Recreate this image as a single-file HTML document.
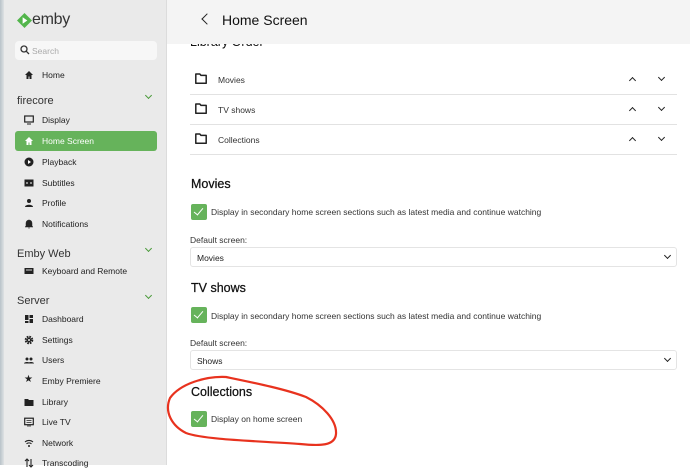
<!DOCTYPE html>
<html><head><meta charset="utf-8"><style>
*{margin:0;padding:0;box-sizing:border-box}
body{width:690px;height:465px;overflow:hidden;background:#fff;font-family:"Liberation Sans",sans-serif;color:#222;position:relative}
.abs{position:absolute}
#side{left:0;top:0;width:167px;height:465px;background:#eaeaea;border-right:1px solid #dcdcdc}
#edge{left:0;top:0;width:4px;height:465px;background:linear-gradient(90deg,#b8c2c8,#dfe2e4)}
.it{position:absolute;left:42px;font-size:8.5px;color:#222;line-height:12px}
.ic{position:absolute;left:24px;width:10px;height:10px}
.hd{position:absolute;left:17px;font-size:11px;color:#333;line-height:14px}
.chev{position:absolute;left:146px;width:5px;height:5px;border-right:1.3px solid #4a9a3a;border-bottom:1.3px solid #4a9a3a;transform:rotate(45deg)}
#top{left:167px;top:0;width:523px;height:44px;background:#f4f4f4}
.row{position:absolute;left:190px;width:487px;height:30px;border-bottom:1px solid #e2e2e2}
.row span{position:absolute;left:28px;top:10px;font-size:8.5px;color:#333}
.row svg{position:absolute;left:5px;top:8px}
.up,.dn{position:absolute;width:5px;height:5px;border-left:1.3px solid #222;border-top:1.3px solid #222}
.up{left:440px;top:13px;transform:rotate(45deg)}
.dn{left:469px;top:10px;transform:rotate(225deg)}
.h2{position:absolute;left:191px;font-size:12.5px;color:#111;-webkit-text-stroke:0.25px #111}
.cb{position:absolute;left:191px;width:16px;height:16px;background:#66b35b;border-radius:2px}
.cb:after{content:"";position:absolute;left:5px;top:2px;width:4px;height:8px;border-right:1.5px solid #fff;border-bottom:1.5px solid #fff;transform:rotate(40deg)}
.ct{position:absolute;left:211px;font-size:8.5px;color:#333}
.lb{position:absolute;left:190px;font-size:8.5px;color:#333}
.sel{position:absolute;left:190px;width:487px;height:20px;border:1px solid #e4e4e4;border-radius:3px;background:#fff}
.sel span{position:absolute;left:6px;top:5px;font-size:8.5px;color:#222}
.sel i{position:absolute;right:6px;top:5px;width:5px;height:5px;border-right:1.3px solid #222;border-bottom:1.3px solid #222;transform:rotate(45deg)}
</style></head><body>
<div id="side" class="abs"></div><div id="edge" class="abs"></div>
<svg class="abs" style="left:17px;top:13px" width="15" height="15" viewBox="0 0 16 16"><path d="M8 0L16 8 8 16 0 8z" fill="#52b54b"/><path d="M6 4.5L11 8 6 11.5z" fill="#fff"/></svg>
<div class="abs" style="left:32px;top:11px;font-size:16px;color:#333;letter-spacing:-0.3px">emby</div>
<div class="abs" style="left:15px;top:41px;width:142px;height:19px;background:#f7f7f7;border-radius:4px"></div>
<svg class="abs" style="left:20px;top:45px" width="10" height="10" viewBox="0 0 10 10"><circle cx="4" cy="4" r="3" fill="none" stroke="#333" stroke-width="1.3"/><path d="M6.2 6.2L9 9" stroke="#333" stroke-width="1.3"/></svg>
<div class="abs" style="left:32px;top:46px;font-size:8.5px;color:#aaa">Search</div>
<div class="it" style="top:69px">Home</div><svg class="ic" style="top:70px" viewBox="0 0 10 10"><path d="M5 1L1 5h1.5v4h2V6.5h1V9h2V5H9z" fill="#222"/></svg>
<div class="hd" style="top:94px">firecore</div><div class="chev" style="top:93px"></div>
<div class="it" style="top:114px">Display</div><svg class="ic" style="top:115px" viewBox="0 0 10 10"><rect x="0.7" y="1" width="8.6" height="6" fill="none" stroke="#222" stroke-width="1.2"/><path d="M3 9h4" stroke="#222"/></svg>
<div class="abs" style="left:15px;top:131px;width:142px;height:20px;background:#66b35b;border-radius:3px"></div>
<div class="it" style="top:135px;color:#fff">Home Screen</div><svg class="ic" style="top:136px" viewBox="0 0 10 10"><path d="M5 1L1 5h1.5v4h2V6.5h1V9h2V5H9z" fill="#fff"/></svg>
<div class="it" style="top:156px">Playback</div><svg class="ic" style="top:157px" viewBox="0 0 10 10"><circle cx="5" cy="5" r="4.5" fill="#222"/><path d="M4 3l3 2-3 2z" fill="#fff"/></svg>
<div class="it" style="top:177px">Subtitles</div><svg class="ic" style="top:178px" viewBox="0 0 10 10"><rect x="0.5" y="1.5" width="9" height="7" fill="#222"/><path d="M2 5h2M6 5h2" stroke="#fff"/></svg>
<div class="it" style="top:197px">Profile</div><svg class="ic" style="top:198px" viewBox="0 0 10 10"><circle cx="5" cy="3" r="2" fill="#222"/><path d="M1 9c0-3 8-3 8 0z" fill="#222"/></svg>
<div class="it" style="top:218px">Notifications</div><svg class="ic" style="top:219px" viewBox="0 0 10 10"><path d="M5 1c-2 0-3 1.5-3 3.5V7L1 8h8L8 7V4.5C8 2.5 7 1 5 1zM4 9h2" fill="#222" stroke="#222" stroke-width=".5"/></svg>
<div class="hd" style="top:247px">Emby Web</div><div class="chev" style="top:246px"></div>
<div class="it" style="top:265px">Keyboard and Remote</div><svg class="ic" style="top:266px" viewBox="0 0 10 10"><rect x="0.5" y="2" width="9" height="6" fill="#222"/><path d="M2 4h6" stroke="#fff" stroke-width=".8"/></svg>
<div class="hd" style="top:294px">Server</div><div class="chev" style="top:293px"></div>
<div class="it" style="top:313px">Dashboard</div><svg class="ic" style="top:314px" viewBox="0 0 10 10"><path d="M1 1h3.5v5H1zM5.5 1H9v3H5.5zM1 7h3.5v2H1zM5.5 5H9v4H5.5z" fill="#222"/></svg>
<div class="it" style="top:334px">Settings</div><svg class="ic" style="top:335px" viewBox="0 0 10 10"><circle cx="5" cy="5" r="3.2" fill="none" stroke="#222" stroke-width="2.2" stroke-dasharray="1.6 0.9"/><circle cx="5" cy="5" r="2.3" fill="#222"/><circle cx="5" cy="5" r="1" fill="#eaeaea"/></svg>
<div class="it" style="top:354px">Users</div><svg class="ic" style="top:355px" viewBox="0 0 10 10"><circle cx="3" cy="4" r="1.5" fill="#222"/><circle cx="7" cy="4" r="1.5" fill="#222"/><path d="M0 8.5c0-2 6-2 6 0zM4 8.5c0-2 6-2 6 0z" fill="#222"/></svg>
<div class="it" style="top:375px">Emby Premiere</div><div class="ic" style="top:374px;font-size:10px;line-height:12px">★</div>
<div class="it" style="top:396px">Library</div><svg class="ic" style="top:397px" viewBox="0 0 10 10"><path d="M0.5 2h3.5l1 1h4.5v6h-9z" fill="#222"/></svg>
<div class="it" style="top:416px">Live TV</div><svg class="ic" style="top:417px" viewBox="0 0 10 10"><rect x="0.7" y="1.2" width="8.6" height="6.5" fill="none" stroke="#222" stroke-width="1.2"/><path d="M3 9h4M2.5 3.5h5M2.5 5.5h5" stroke="#222" stroke-width=".8"/></svg>
<div class="it" style="top:437px">Network</div><svg class="ic" style="top:438px" viewBox="0 0 10 10"><path d="M1 4a6 6 0 0 1 8 0M2.5 5.8a4 4 0 0 1 5 0" fill="none" stroke="#222" stroke-width="1.1"/><circle cx="5" cy="8" r="1" fill="#222"/></svg>
<div class="it" style="top:457px">Transcoding</div><svg class="ic" style="top:458px" viewBox="0 0 10 10"><path d="M3 1v8M7 1v8M1 3l2-2 2 2M5 7l2 2 2-2" fill="none" stroke="#222" stroke-width="1.1"/></svg>
<div class="abs" style="left:190px;top:35px;font-size:12.5px;color:#111">Library Order</div>
<div id="top" class="abs"></div>
<div class="abs" style="left:203px;top:15px;width:8px;height:8px;border-left:1.6px solid #222;border-bottom:1.6px solid #222;transform:rotate(45deg)"></div>
<div class="abs" style="left:222px;top:12px;font-size:14px;color:#111">Home Screen</div>
<div class="row" style="top:65px"><svg width="12" height="11" viewBox="0 0 12 11"><path d="M0.8 1h4l1.2 1.4h5.2v7.8H0.8z" fill="none" stroke="#222" stroke-width="1.5" stroke-linejoin="round"/></svg><span>Movies</span><div class="up"></div><div class="dn"></div></div>
<div class="row" style="top:95px"><svg width="12" height="11" viewBox="0 0 12 11"><path d="M0.8 1h4l1.2 1.4h5.2v7.8H0.8z" fill="none" stroke="#222" stroke-width="1.5" stroke-linejoin="round"/></svg><span>TV shows</span><div class="up"></div><div class="dn"></div></div>
<div class="row" style="top:125px"><svg width="12" height="11" viewBox="0 0 12 11"><path d="M0.8 1h4l1.2 1.4h5.2v7.8H0.8z" fill="none" stroke="#222" stroke-width="1.5" stroke-linejoin="round"/></svg><span>Collections</span><div class="up"></div><div class="dn"></div></div>
<div class="h2" style="top:177px">Movies</div>
<div class="cb" style="top:204px"></div><div class="ct" style="top:207px">Display in secondary home screen sections such as latest media and continue watching</div>
<div class="lb" style="top:235px">Default screen:</div>
<div class="sel" style="top:247px"><span>Movies</span><i></i></div>
<div class="h2" style="top:281px">TV shows</div>
<div class="cb" style="top:307px"></div><div class="ct" style="top:311px">Display in secondary home screen sections such as latest media and continue watching</div>
<div class="lb" style="top:338px">Default screen:</div>
<div class="sel" style="top:350px"><span>Shows</span><i></i></div>
<div class="h2" style="top:385px">Collections</div>
<div class="cb" style="top:411px"></div><div class="ct" style="top:414px">Display on home screen</div>
<svg class="abs" style="left:0;top:0" width="690" height="465"><path d="M226 377C205 376 180 384 170 398C164 412 172 426 186 433C205 440 260 441 300 444C320 446 335 446 336 434C337 420 322 405 306 397C285 389 255 383 226 377Z" fill="none" stroke="#e8321e" stroke-width="2.2"/></svg>
</body></html>
